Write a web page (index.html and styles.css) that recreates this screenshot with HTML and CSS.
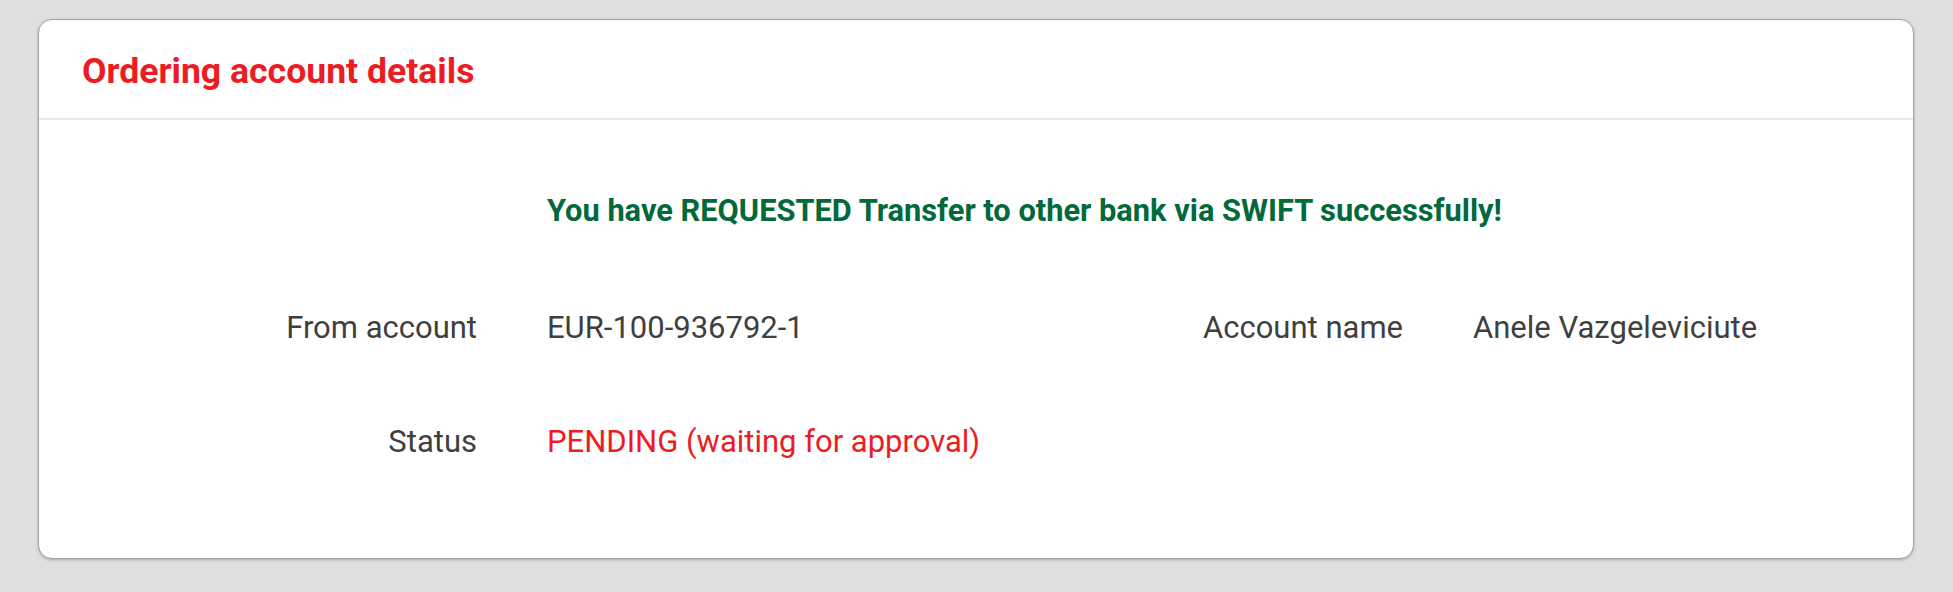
FILE: index.html
```html
<!DOCTYPE html>
<html lang="en">
<head>
<meta charset="utf-8">
<title>Ordering account details</title>
<link rel="stylesheet" href="styles.css">
</head>
<body>
<section class="card">
  <header class="card-header">
    <h2 class="card-title">Ordering account details</h2>
  </header>
  <div class="card-body">
    <div class="details">
      <p class="message">You have REQUESTED Transfer to other bank via SWIFT successfully!</p>
      <div class="label">From account</div>
      <div class="value">EUR-100-936792-1</div>
      <div class="label">Account name</div>
      <div class="value">Anele Vazgeleviciute</div>
      <div class="label">Status</div>
      <div class="value status">PENDING (waiting for approval)</div>
    </div>
  </div>
</section>
</body>
</html>
```
FILE: styles.css
```css
html, body {
  margin: 0;
  padding: 0;
}
body {
  background: #dfdfdf;
  font-family: Roboto, "Liberation Sans", Arial, sans-serif;
  padding: 19px 39px 33px 38px;
  height: 592px;
  box-sizing: border-box;
}
.card {
  background: #ffffff;
  border: 1px solid #a3a3a3;
  border-radius: 14px;
  box-shadow: 0 1px 3px rgba(0, 0, 0, 0.25);
  height: 540px;
  box-sizing: border-box;
}
.card-header {
  height: 98px;
  border-bottom: 2px solid #e8e8e8;
  display: flex;
  align-items: center;
  padding-left: 43px;
}
.card-title {
  margin: 0;
  font-size: 35.6px;
  line-height: 40px;
  font-weight: 700;
  color: #ed1c24;
  padding-top: 3px;
}
.card-body {
  padding: 71px 0 0 0;
}
.details {
  display: grid;
  grid-template-columns: 438px 586px 200px 1fr;
  column-gap: 70px;
  row-gap: 74px;
  font-size: 31px;
  line-height: 40px;
  color: #3f3f3f;
}
.message {
  grid-column: 2 / 5;
  margin: 0 0 3px 0;
  font-size: 30.8px;
  line-height: 40px;
  font-weight: 700;
  color: #02693a;
}
.label {
  text-align: right;
}
.value {
  text-align: left;
}
.status {
  color: #ed1c24;
}
```
